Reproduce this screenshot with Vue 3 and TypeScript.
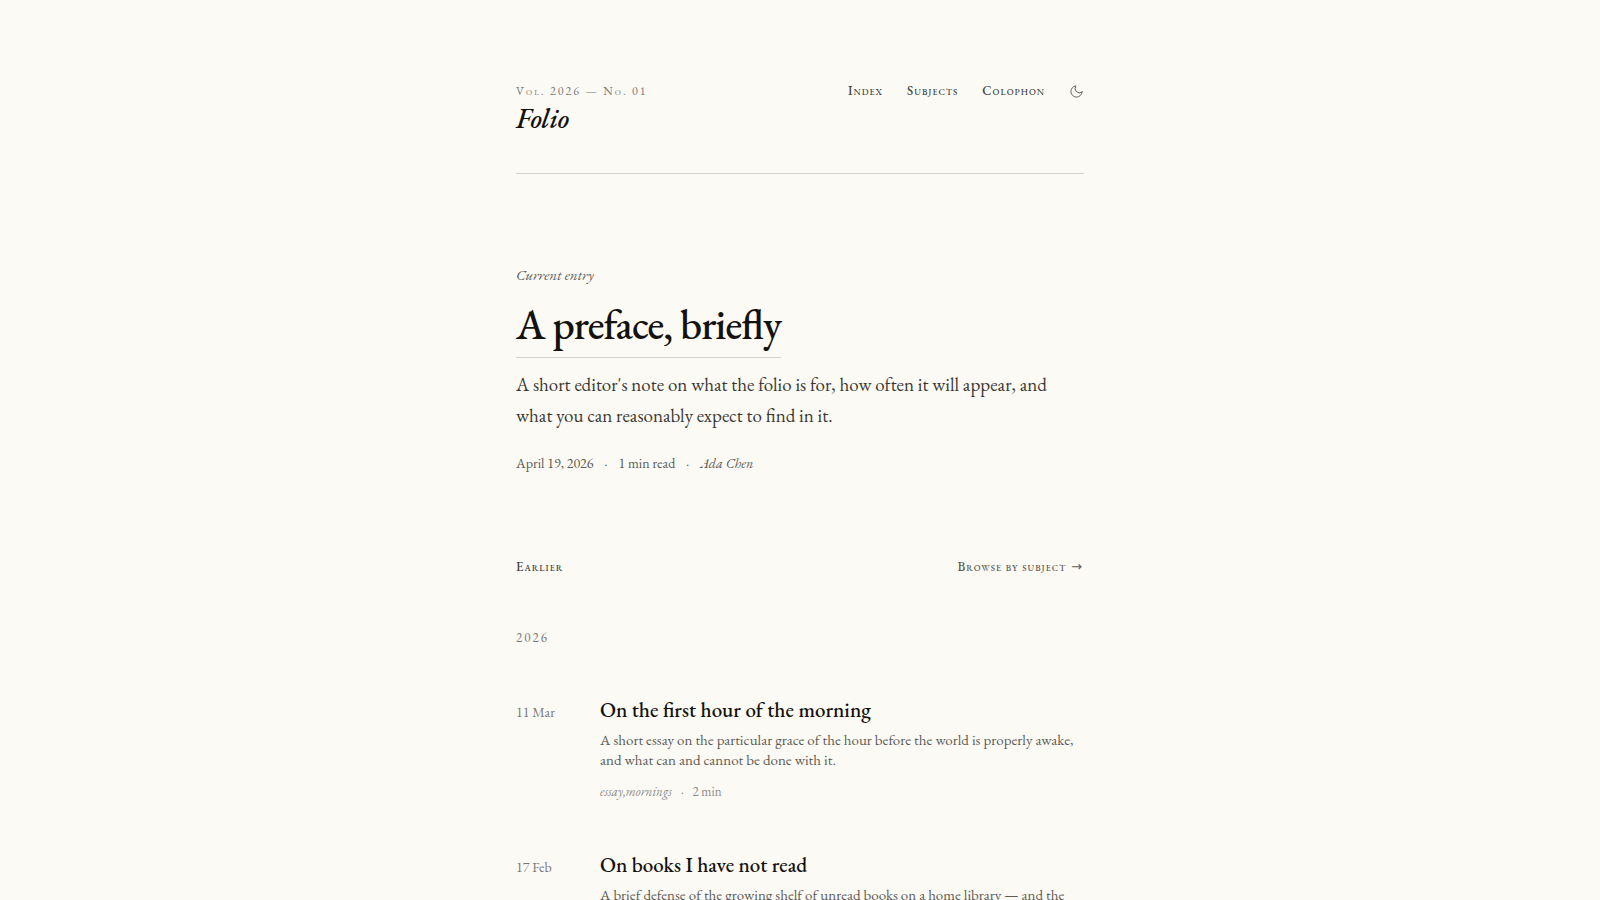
<script setup lang="ts">
interface Entry {
  date: string
  iso: string
  title: string
  summary: string
  tags?: string
  minutes?: string
}

interface Run {
  text: string
  small: boolean
}

const links: string[] = ['Index', 'Subjects', 'Colophon']

/** Splits a label into runs so lowercase letters can be set as reduced capitals. */
function runs(label: string): Run[] {
  return (label.match(/[a-z]+|[^a-z]+/g) ?? []).map((text) => ({
    text,
    small: /[a-z]/.test(text),
  }))
}

const entries: Entry[] = [
  {
    date: '11 Mar',
    iso: '2026-03-11',
    title: 'On the first hour of the morning',
    summary:
      'A short essay on the particular grace of the hour before the world is properly awake, and what can and cannot be done with it.',
    tags: 'essay,mornings',
    minutes: '2 min',
  },
  {
    date: '17 Feb',
    iso: '2026-02-17',
    title: 'On books I have not read',
    summary: 'A brief defense of the growing shelf of unread books on a home library — and the',
  },
]
</script>

<template>
  <div class="page">
    <header class="masthead">
      <div class="brand">
        <p class="volume"><span v-for="(run, i) in runs('Vol. 2026 — No. 01')" :key="i" :class="{ small: run.small }">{{ run.text }}</span></p>
        <a class="name" href="#">Folio</a>
      </div>
      <nav class="nav">
        <a v-for="link in links" :key="link" href="#"><span v-for="(run, i) in runs(link)" :key="i" :class="{ small: run.small }">{{ run.text }}</span></a>
        <button class="theme" type="button" aria-label="Toggle dark theme">
          <svg viewBox="0 0 24 24" width="15" height="15" fill="none" stroke="currentColor" stroke-width="1.6" stroke-linecap="round" stroke-linejoin="round">
            <path d="M21 12.8A9 9 0 1 1 11.2 3a7 7 0 0 0 9.8 9.8z" />
          </svg>
        </button>
      </nav>
    </header>

    <main>
      <section class="current">
        <p class="kicker">Current entry</p>
        <h1><a href="#">A preface, briefly</a></h1>
        <p class="lead">A short editor's note on what the folio is for, how often it will appear, and what you can reasonably expect to find in it.</p>
        <p class="meta">
          <time datetime="2026-04-19">April 19, 2026</time>
          <span>·</span>
          <span>1 min read</span>
          <span>·</span>
          <em>Ada Chen</em>
        </p>
      </section>

      <section>
        <div class="section-head">
          <h2><span v-for="(run, i) in runs('Earlier')" :key="i" :class="{ small: run.small }">{{ run.text }}</span></h2>
          <a href="#"><span v-for="(run, i) in runs('Browse by subject ')" :key="i" :class="{ small: run.small }">{{ run.text }}</span><span class="arrow">→</span></a>
        </div>
        <h3 class="year">2026</h3>
        <ol class="entries">
          <li v-for="entry in entries" :key="entry.iso" class="entry">
            <time :datetime="entry.iso">{{ entry.date }}</time>
            <article>
              <h4><a href="#">{{ entry.title }}</a></h4>
              <p class="summary">{{ entry.summary }}</p>
              <p v-if="entry.tags" class="tags">
                <em>{{ entry.tags }}</em>
                <span>·</span>
                <span>{{ entry.minutes }}</span>
              </p>
            </article>
          </li>
        </ol>
      </section>
    </main>
  </div>
</template>

<style>
body {
  margin: 0;
  background: #fcfaf5;
}
</style>

<style scoped>
.page {
  box-sizing: border-box;
  max-width: 616px;
  margin: 0 auto;
  padding: 80px 24px 0;
  font-family: "EB Garamond", "Liberation Serif", serif;
  color: #14120e;
}

h1, h2, h3, h4, p, ol {
  margin: 0;
  padding: 0;
  font-weight: 400;
}

a {
  color: inherit;
  text-decoration: none;
}

.small {
  font-size: 9px;
  line-height: 1;
  text-transform: uppercase;
}

.masthead {
  display: flex;
  justify-content: space-between;
  align-items: flex-start;
  padding-bottom: 39px;
  border-bottom: 1px solid #d6d4cf;
}

.brand {
  display: flex;
  flex-direction: column;
}

.volume {
  font-size: 12px;
  line-height: 22px;
  letter-spacing: 2px;
  color: #7a7975;
}

.volume .small {
  font-size: 8px;
}

.name {
  font-size: 28px;
  font-weight: 500;
  line-height: 32px;
  font-style: italic;
}

.nav {
  display: flex;
  align-items: center;
  gap: 24px;
  font-size: 13px;
  font-weight: 500;
  line-height: 22px;
  letter-spacing: 1px;
  color: #45443f;
}

.theme {
  display: flex;
  padding: 0;
  border: 0;
  background: none;
  color: #63615b;
  cursor: pointer;
}

.current {
  padding-top: 89px;
}

.kicker {
  font-size: 15px;
  line-height: 24px;
  font-style: italic;
  color: #5c5b56;
}

h1 {
  margin-top: 16px;
  font-size: 42px;
  font-weight: 500;
  line-height: 44px;
  letter-spacing: -1px;
  font-feature-settings: "liga" 1;
}

h1 a {
  display: inline-block;
  padding-bottom: 10px;
  border-bottom: 1px solid #d6d4cf;
}

.lead {
  margin-top: 11px;
  font-size: 19px;
  line-height: 31px;
  color: #3a3934;
}

.meta,
.tags {
  display: flex;
  gap: 11px;
}

.meta {
  margin-top: 20px;
  font-size: 14px;
  line-height: 24px;
  color: #5c5b56;
}

.section-head {
  display: flex;
  justify-content: space-between;
  margin-top: 81px;
  line-height: 22px;
  letter-spacing: 1px;
  color: #5c5b56;
}

.section-head h2,
.section-head a {
  font-size: 13px;
  font-weight: 500;
}

.section-head h2 {
  color: #45443f;
}

.arrow {
  margin: 0 1px;
  font-family: "DejaVu Sans", sans-serif;
  line-height: 1;
}

.year {
  margin-top: 48px;
  font-size: 13px;
  line-height: 24px;
  letter-spacing: 2px;
  color: #7a7975;
}

.entries {
  display: flex;
  flex-direction: column;
  gap: 49px;
  margin-top: 46px;
  list-style: none;
}

.entry {
  display: grid;
  grid-template-columns: 60px 1fr;
  column-gap: 24px;
  align-items: baseline;
}

.entry time {
  font-size: 14px;
  line-height: 20px;
  color: #7a7975;
}

h4 {
  font-size: 21px;
  font-weight: 500;
  line-height: 28px;
}

.summary {
  margin-top: 6px;
  font-size: 15px;
  line-height: 20px;
  color: #5c5b56;
}

.tags {
  gap: 9px;
  margin-top: 12px;
  font-size: 13px;
  line-height: 20px;
  color: #8d8c88;
}
</style>
